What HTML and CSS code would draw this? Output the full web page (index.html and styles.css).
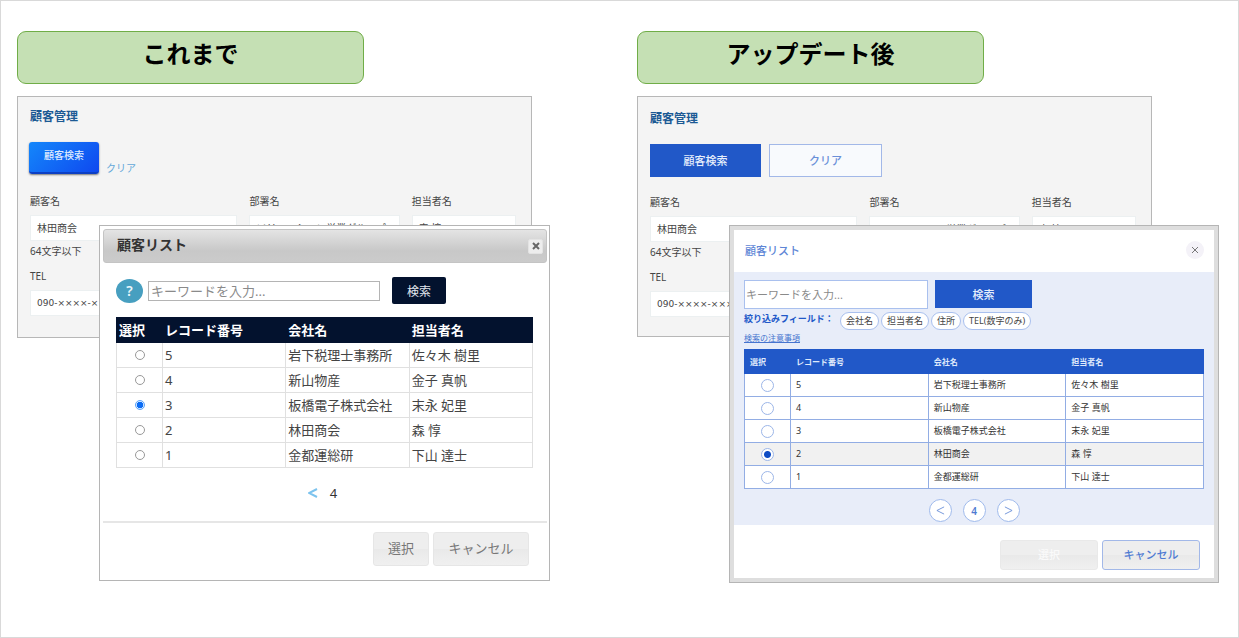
FILE: index.html
```html
<!DOCTYPE html>
<html lang="ja">
<head>
<meta charset="utf-8">
<title>顧客管理</title>
<link rel="stylesheet" href="styles.css">
</head>
<body>
<main class="page">
  <section class="column before">
    <h1 class="pill">これまで</h1>
    <div class="stage">
      <div class="panel">
        <h2 class="panel-title">顧客管理</h2>
        <div class="actions">
          <button class="lookup" type="button">顧客検索</button>
          <a class="clear" href="#">クリア</a>
        </div>
        <div class="fields">
          <div class="field"><label for="b-name">顧客名</label><input id="b-name" value="林田商会"><span class="hint">64文字以下</span></div>
          <div class="field"><label for="b-dept">部署名</label><input id="b-dept" value="ソリューション営業グループ"></div>
          <div class="field"><label for="b-person">担当者名</label><input id="b-person" value="森 惇"></div>
          <div class="field"><label for="b-tel">TEL</label><input id="b-tel" class="tel" value="090-××××-××××"></div>
        </div>
      </div>
      <div class="dialog">
        <header class="dialog-head">
          <h2>顧客リスト</h2>
          <button class="close" type="button" aria-label="閉じる"><svg viewBox="0 0 8 8"><path d="M1 1l6 6M7 1l-6 6"/></svg></button>
        </header>
        <div class="dialog-body">
          <div class="search">
            <button class="help" type="button">?</button>
            <input class="keyword" aria-label="キーワード" placeholder="キーワードを入力...">
            <button class="go" type="button">検索</button>
          </div>
          <table class="list">
            <colgroup><col class="c-pick"><col class="c-wide"><col class="c-wide"><col class="c-wide"></colgroup>
            <thead><tr><th>選択</th><th>レコード番号</th><th>会社名</th><th>担当者名</th></tr></thead>
            <tbody>
              <tr><td><input type="radio" name="b" aria-label="5"></td><td>5</td><td>岩下税理士事務所</td><td>佐々木 樹里</td></tr>
              <tr><td><input type="radio" name="b" aria-label="4"></td><td>4</td><td>新山物産</td><td>金子 真帆</td></tr>
              <tr><td><input type="radio" name="b" aria-label="3" checked></td><td>3</td><td>板橋電子株式会社</td><td>末永 妃里</td></tr>
              <tr><td><input type="radio" name="b" aria-label="2"></td><td>2</td><td>林田商会</td><td>森 惇</td></tr>
              <tr><td><input type="radio" name="b" aria-label="1"></td><td>1</td><td>金都運総研</td><td>下山 達士</td></tr>
            </tbody>
          </table>
          <nav class="pager">
            <a href="#" aria-label="前へ"><svg viewBox="0 0 10 10"><path d="M9 1L1 5l8 4"/></svg></a>
            <span>4</span>
          </nav>
        </div>
        <footer class="dialog-foot">
          <button type="button">選択</button>
          <button type="button">キャンセル</button>
        </footer>
      </div>
    </div>
  </section>

  <section class="column after">
    <h1 class="pill">アップデート後</h1>
    <div class="stage">
      <div class="panel">
        <h2 class="panel-title">顧客管理</h2>
        <div class="actions">
          <button class="lookup" type="button">顧客検索</button>
          <button class="clear" type="button">クリア</button>
        </div>
        <div class="fields">
          <div class="field"><label for="a-name">顧客名</label><input id="a-name" value="林田商会"><span class="hint">64文字以下</span></div>
          <div class="field"><label for="a-dept">部署名</label><input id="a-dept" value="ソリューション営業グループ"></div>
          <div class="field"><label for="a-person">担当者名</label><input id="a-person" value="森 惇"></div>
          <div class="field"><label for="a-tel">TEL</label><input id="a-tel" class="tel" value="090-××××-××××"></div>
        </div>
      </div>
      <div class="dialog">
        <header class="dialog-head">
          <h2>顧客リスト</h2>
          <button class="close" type="button" aria-label="閉じる"><svg viewBox="0 0 8 8"><path d="M1 1l6 6M7 1l-6 6"/></svg></button>
        </header>
        <div class="dialog-body">
          <div class="search">
            <input class="keyword" aria-label="キーワード" placeholder="キーワードを入力...">
            <button class="go" type="button">検索</button>
          </div>
          <div class="filters">
            <strong>絞り込みフィールド：</strong>
            <button type="button">会社名</button>
            <button type="button">担当者名</button>
            <button type="button">住所</button>
            <button type="button">TEL(数字のみ)</button>
          </div>
          <a class="notes" href="#">検索の注意事項</a>
          <table class="list">
            <colgroup><col class="c-pick"><col class="c-wide"><col class="c-wide"><col class="c-wide"></colgroup>
            <thead><tr><th>選択</th><th>レコード番号</th><th>会社名</th><th>担当者名</th></tr></thead>
            <tbody>
              <tr><td><input type="radio" name="a" aria-label="5"></td><td>5</td><td>岩下税理士事務所</td><td>佐々木 樹里</td></tr>
              <tr><td><input type="radio" name="a" aria-label="4"></td><td>4</td><td>新山物産</td><td>金子 真帆</td></tr>
              <tr><td><input type="radio" name="a" aria-label="3"></td><td>3</td><td>板橋電子株式会社</td><td>末永 妃里</td></tr>
              <tr class="picked"><td><input type="radio" name="a" aria-label="2" checked></td><td>2</td><td>林田商会</td><td>森 惇</td></tr>
              <tr><td><input type="radio" name="a" aria-label="1"></td><td>1</td><td>金都運総研</td><td>下山 達士</td></tr>
            </tbody>
          </table>
          <nav class="pager">
            <a href="#" aria-label="前へ"><svg viewBox="0 0 10 10"><path d="M9 1L1 5l8 4"/></svg></a>
            <span>4</span>
            <a href="#" aria-label="次へ"><svg viewBox="0 0 10 10"><path d="M1 1l8 4-8 4"/></svg></a>
          </nav>
        </div>
        <footer class="dialog-foot">
          <button class="off" type="button">選択</button>
          <button type="button">キャンセル</button>
        </footer>
      </div>
    </div>
  </section>
</main>
</body>
</html>
```

FILE: styles.css
```css
* { box-sizing: border-box; }

body, button, input {
  font-family: "Noto Sans", "Noto Sans CJK JP", sans-serif;
}

body {
  margin: 0;
  background: #fff;
  color: #444;
}

h1, h2 { margin: 0; }
button { padding: 0; cursor: pointer; }
a { text-decoration: none; }
svg { display: block; fill: none; }

.page {
  display: grid;
  grid-template-columns: 1fr 1fr;
  gap: 20px;
  min-height: 100vh;
  padding: 30px 1px 30px 16px;
  border: 1px solid #d9d9d9;
}

.pill {
  margin-right: 253px;
  padding: 8px 0 15px;
  border: 1px solid #70ad47;
  border-radius: 9px;
  background: #c5e0b4;
  color: #000;
  font-size: 24px;
  line-height: 28px;
  text-align: center;
}

/* Panel and dialog share one grid cell so that the dialog lies over the panel. */
.stage {
  display: grid;
  margin-top: 12px;
}

.panel, .dialog { grid-area: 1 / 1; min-width: 0; }

.panel {
  align-self: start;
  margin-right: 85px;
  padding: 12px 15px 21px 12px;
  border: 1px solid #b7b7b7;
  background: #f4f4f4;
  font-size: 10px;
  line-height: 16px;
}

.panel-title {
  color: #1c5a94;
  font-size: 12px;
  line-height: 16px;
}

.actions {
  display: flex;
  margin: 17px 0 19px;
}

.before .lookup {
  width: 70px;
  height: 32px;
  margin-left: -1px;
  padding-bottom: 5px;
  border: 0;
  border-bottom: 2px solid #0c3fc4;
  border-radius: 3px;
  background: linear-gradient(135deg, #1487fb, #0f48ef);
  box-shadow: 0 1px 2px #777;
  color: #dce9ff;
  font-size: 10px;
  font-weight: 500;
}

.before .clear {
  align-self: flex-end;
  margin-left: 7px;
  margin-bottom: -2px;
  color: #62a7d9;
}

.fields {
  display: grid;
  grid-template-columns: 207fr 150fr 104fr;
  gap: 9px 12px;
}

.field {
  display: flex;
  flex-direction: column;
  min-width: 0;
}

.field input {
  width: 100%;
  height: 26px;
  margin-top: 6px;
  padding: 0 6px 2px;
  border: 1px solid #ecf0f1;
  background: #fff;
  color: #444;
  font-size: 10px;
}

.field .tel {
  padding-bottom: 0;
  font-family: "DejaVu Sans", sans-serif;
  font-size: 9px;
}

.hint { margin-top: 2px; }

.dialog {
  align-self: start;
  border: 1px solid #b5b5b5;
  background: #fff;
}

.dialog-head {
  display: flex;
  align-items: center;
  justify-content: space-between;
}

.list {
  width: 100%;
  border-collapse: collapse;
  table-layout: fixed;
  background: #fff;
}

.list th, .list td {
  overflow: hidden;
  text-align: left;
  white-space: nowrap;
}

.list td:first-child { text-align: center; }

.list input {
  display: block;
  margin: 0 auto;
  appearance: none;
  border-radius: 50%;
  background: #fff;
}

.c-pick { width: 46px; }

.pager {
  display: flex;
  align-items: center;
  justify-content: center;
}

.dialog-foot {
  display: flex;
  justify-content: flex-end;
  gap: 4px;
}

.dialog-foot button {
  border: 1px solid #e6e6e6;
  border-radius: 3px;
  background: linear-gradient(#eee 50%, #e9e9e9 50%, #f0f0f0);
}

/* Former design */
.before .dialog {
  margin: 129px 67px 0 82px;
  padding: 3px 2px 3px 3px;
}

.before .dialog-head {
  height: 34px;
  padding: 0 3px 0 13px;
  border: 1px solid #c4c4c4;
  border-radius: 3px;
  background: linear-gradient(#e4e4e4, #c8c8c8 65%, #cbcbcb);
}

.before .dialog-head h2 {
  padding-bottom: 3px;
  color: #333;
  font-size: 14px;
  line-height: 18px;
}

.before .close {
  display: grid;
  place-items: center;
  width: 15px;
  height: 15px;
  border: 1px solid #e3e3e3;
  border-radius: 2px;
  background: #ededed;
}

.before .close svg { width: 8px; height: 8px; stroke: #666; stroke-width: 2; }

.before .dialog-body {
  padding: 14px 14px 19px 13px;
  border-bottom: 2px solid #e6e6e6;
}

.before .search {
  display: flex;
  align-items: center;
  margin-bottom: 13px;
}

.help {
  width: 27px;
  height: 24px;
  border: 0;
  border-radius: 50%;
  background: #479fc0;
  color: #e9f6fa;
  font-size: 14px;
  font-weight: 600;
  line-height: 20px;
}

.before .keyword {
  width: 232px;
  height: 20px;
  margin: 0 12px 0 5px;
  padding: 0 2px;
  border: 1px solid #b4b4b4;
  font-size: 13px;
}

.keyword::placeholder { color: #8a8a8a; }

.before .go {
  width: 54px;
  height: 27px;
  border: 0;
  border-radius: 2px;
  background: #03122e;
  color: #e4e8ee;
  font-size: 12px;
}

.before .list { font-size: 13px; line-height: 20px; }

.before .list th, .before .list td {
  height: 25px;
  padding: 0 2px;
  border: 1px solid #e0e0e0;
}

.before .list th {
  border-color: #03122e;
  background: #03122e;
  color: #fff;
}

.before .list input {
  width: 10px;
  height: 10px;
  border: 1px solid #999;
}

.before .list input:checked {
  border-color: #5da4fa;
  background: radial-gradient(circle, #0a6cf5 0 3px, #d2e7ff 3px);
}

.before .pager {
  gap: 12px;
  margin: 16px 4px 0 0;
  color: #333;
  font-size: 13px;
  line-height: 18px;
}

.before .pager svg { width: 10px; height: 10px; stroke: #7cc3ee; stroke-width: 2; }

.before .dialog-foot { padding: 9px 18px 11px; }

.before .dialog-foot button {
  width: 96px;
  height: 34px;
  padding-bottom: 3px;
  color: #777;
  font-size: 13px;
}

.before .dialog-foot button:first-child { width: 56px; }

/* Updated design */
.after .panel { padding: 14px 15px 19px 12px; }
.after .actions { gap: 8px; margin: 17px 0; }

.after .lookup, .after .clear {
  width: 111px;
  height: 33px;
  padding-bottom: 2px;
  border: 1px solid #2158c8;
  background: #2158c8;
  color: #e6eefc;
  font-size: 11px;
  font-weight: 500;
}

.after .clear {
  width: 113px;
  border-color: #a2b8e8;
  background: #f8fafd;
  color: #6a8fd8;
}

.after .dialog {
  margin: 129px 18px 0 92px;
  border: 1px solid #b5b5b5;
  background: #fff;
  box-shadow: inset 0 0 0 4px #dedede;
  padding: 4px;
}

.after .dialog-head { height: 42px; padding: 0 10px 2px 11px; }

.after .dialog-head h2 {
  color: #5e86d6;
  font-size: 11px;
  font-weight: 500;
}

.after .close {
  display: grid;
  place-items: center;
  width: 18px;
  height: 18px;
  border: 0;
  border-radius: 50%;
  background: #f4f2f8;
}

.after .close svg { width: 8px; height: 8px; stroke: #777; stroke-width: 1; }

.after .dialog-body {
  padding: 8px 10px 3px;
  background: #e8edf9;
}

.after .search { display: flex; gap: 7px; }

.after .keyword {
  width: 40%;
  height: 29px;
  padding: 0 1px;
  border: 1px solid #a9c0ee;
  font-size: 11px;
}

.after .go {
  width: 97px;
  height: 28px;
  border: 0;
  background: #2158c8;
  color: #e6eefc;
  font-size: 11px;
  font-weight: 500;
}

.filters {
  display: flex;
  gap: 2px;
  margin-top: 3px;
}

.filters strong {
  width: 94px;
  color: #2158c8;
  font-size: 9px;
  line-height: 14px;
  white-space: nowrap;
}

.filters button {
  height: 18px;
  padding: 0 5px;
  border: 1px solid #a9c0ee;
  border-radius: 9px;
  background: #fff;
  color: #444;
  font-size: 9px;
  line-height: 14px;
}

.notes {
  display: block;
  margin: 2px 0 5px;
  color: #4674cf;
  font-size: 8px;
  line-height: 12px;
  text-decoration: underline;
}

.after .list { font-size: 9px; line-height: 14px; }

.after .list th, .after .list td {
  height: 23px;
  padding: 0 5px;
  border: 1px solid #92ade4;
  color: #333;
}

.after .list th {
  height: 24px;
  border-color: #2158c8;
  background: #2158c8;
  color: #dfe9fb;
  font-size: 8px;
}

.after .picked { background: #f1f1f1; }

.after .list input {
  width: 13px;
  height: 13px;
  border: 1px solid #9cb6e8;
}

.after .list input:checked {
  background: radial-gradient(circle, #0f4cc4 0 3px, #fff 4px);
}

.after .pager { gap: 11px; margin-top: 10px; }

.after .pager > * {
  display: grid;
  place-items: center;
  width: 23px;
  height: 23px;
  border: 1px solid #9fbaec;
  border-radius: 50%;
  background: #fff;
  color: #4f7bd2;
  font-size: 10px;
  font-weight: 600;
  line-height: 12px;
}

.after .pager svg { width: 9px; height: 9px; stroke: #6a8fd8; stroke-width: 1; }

.after .dialog-foot { padding: 15px 14px 8px; }

.after .dialog-foot button {
  width: 98px;
  height: 30px;
  padding-bottom: 2px;
  border-color: #a2b8e8;
  color: #4f7bd2;
  font-size: 11px;
  font-weight: 500;
}

.after .dialog-foot .off {
  border-color: #e9e9e9;
  color: #fafafa;
}
```
